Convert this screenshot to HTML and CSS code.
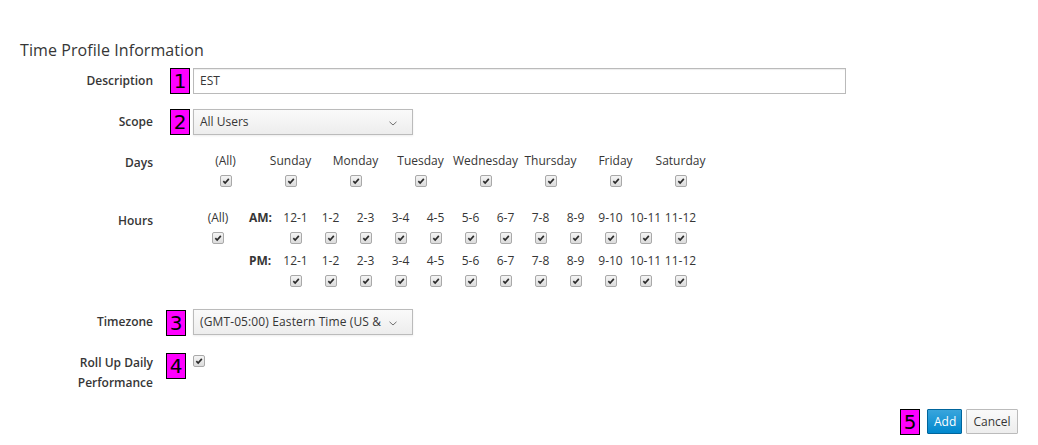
FILE: index.html
```html
<!DOCTYPE html>
<html>
<head>
<meta charset="utf-8">
<link rel="stylesheet" href="styles.css">
</head>
<body>
<div class="page">
  <h3 class="title">Time Profile Information</h3>
  <form class="form">
    <div class="group">
      <div class="label">Description</div>
      <div class="field">
        <span class="badge b-near">1</span>
        <div class="input">EST</div>
      </div>
    </div>
    <div class="group">
      <div class="label">Scope</div>
      <div class="field">
        <span class="badge b-near">2</span>
        <div class="select"><span class="sel-text">All Users</span><svg class="chev" width="8" height="5" viewBox="0 0 8 5"><path d="M0.5 0.8 L4 4 L7.5 0.8" fill="none" stroke="#6f6f6f" stroke-width="1"/></svg></div>
      </div>
    </div>
    <div class="group g-days">
      <div class="label">Days</div>
      <div class="field">
        <div class="days">
          <span class="hd">(All)</span><span class="hd">Sunday</span><span class="hd">Monday</span><span class="hd">Tuesday</span><span class="hd">Wednesday</span><span class="hd">Thursday</span><span class="hd">Friday</span><span class="hd">Saturday</span>
          <span class="cbc"><span class="cb"><svg viewBox="0 0 12 12"><path d="M2.8 6.2 L5 8.4 L9.4 3.4" fill="none" stroke="#2b2b2b" stroke-width="2"/></svg></span></span>
          <span class="cbc"><span class="cb"><svg viewBox="0 0 12 12"><path d="M2.8 6.2 L5 8.4 L9.4 3.4" fill="none" stroke="#2b2b2b" stroke-width="2"/></svg></span></span>
          <span class="cbc"><span class="cb"><svg viewBox="0 0 12 12"><path d="M2.8 6.2 L5 8.4 L9.4 3.4" fill="none" stroke="#2b2b2b" stroke-width="2"/></svg></span></span>
          <span class="cbc"><span class="cb"><svg viewBox="0 0 12 12"><path d="M2.8 6.2 L5 8.4 L9.4 3.4" fill="none" stroke="#2b2b2b" stroke-width="2"/></svg></span></span>
          <span class="cbc"><span class="cb"><svg viewBox="0 0 12 12"><path d="M2.8 6.2 L5 8.4 L9.4 3.4" fill="none" stroke="#2b2b2b" stroke-width="2"/></svg></span></span>
          <span class="cbc"><span class="cb"><svg viewBox="0 0 12 12"><path d="M2.8 6.2 L5 8.4 L9.4 3.4" fill="none" stroke="#2b2b2b" stroke-width="2"/></svg></span></span>
          <span class="cbc"><span class="cb"><svg viewBox="0 0 12 12"><path d="M2.8 6.2 L5 8.4 L9.4 3.4" fill="none" stroke="#2b2b2b" stroke-width="2"/></svg></span></span>
          <span class="cbc"><span class="cb"><svg viewBox="0 0 12 12"><path d="M2.8 6.2 L5 8.4 L9.4 3.4" fill="none" stroke="#2b2b2b" stroke-width="2"/></svg></span></span>
        </div>
      </div>
    </div>
    <div class="group g-hours">
      <div class="label">Hours</div>
      <div class="field">
        <div class="hours" id="hours"></div>
      </div>
    </div>
    <div class="group">
      <div class="label">Timezone</div>
      <div class="field">
        <span class="badge b-far b-tz">3</span>
        <div class="select"><span class="sel-text tz">(GMT-05:00) Eastern Time (US &amp;</span><svg class="chev" width="8" height="5" viewBox="0 0 8 5"><path d="M0.5 0.8 L4 4 L7.5 0.8" fill="none" stroke="#6f6f6f" stroke-width="1"/></svg></div>
      </div>
    </div>
    <div class="group">
      <div class="label">Roll Up Daily<br>Performance</div>
      <div class="field">
        <span class="badge b-far b-roll">4</span>
        <span class="cb cb-roll"><svg viewBox="0 0 12 12"><path d="M2.8 6.2 L5 8.4 L9.4 3.4" fill="none" stroke="#2b2b2b" stroke-width="2"/></svg></span>
      </div>
    </div>
    <div class="actions">
      <span class="badge b-btn">5</span>
      <button type="button" class="btn btn-primary">Add</button>
      <button type="button" class="btn btn-default">Cancel</button>
    </div>
  </form>
</div>
<script src="script.js"></script>
</body>
</html>
```

FILE: script.js
```js
(function () {
  var hours = document.getElementById('hours');
  var labels = ['12-1','1-2','2-3','3-4','4-5','5-6','6-7','7-8','8-9','9-10','10-11','11-12'];
  var check = '<span class="cb"><svg viewBox="0 0 12 12"><path d="M2.8 6.2 L5 8.4 L9.4 3.4" fill="none" stroke="#2b2b2b" stroke-width="2"/></svg></span>';
  var html = '';
  function textRow(first, ampm) {
    html += '<span class="hd">' + first + '</span><span class="ampm">' + ampm + '</span>';
    labels.forEach(function (l) { html += '<span class="hd">' + l + '</span>'; });
  }
  function cbRow(first) {
    html += '<span class="cbc">' + (first ? check : '') + '</span><span class="cbc"></span>';
    labels.forEach(function () { html += '<span class="cbc">' + check + '</span>'; });
  }
  textRow('(All)', 'AM:');
  cbRow(true);
  textRow('', 'PM:');
  cbRow(false);
  hours.innerHTML = html;
})();
```

FILE: styles.css
```css
html, body {
  margin: 0;
  padding: 0;
  background: #fff;
}
body {
  font-family: "Open Sans", "Liberation Sans", sans-serif;
  font-size: 12px;
  color: #363636;
  width: 1038px;
  height: 445px;
  overflow: hidden;
}
.page {
  padding: 40px 20px 0 20px;
}
.title {
  margin: 0;
  font-size: 16px;
  line-height: 20px;
  font-weight: 400;
  color: #363636;
  letter-spacing: 0.08px;
}
.form {
  margin-top: 8px;
  display: flex;
  flex-direction: column;
  gap: 15px;
}
.group {
  display: flex;
  align-items: flex-start;
}
.label {
  width: 133px;
  flex: none;
  text-align: right;
  font-weight: 600;
  line-height: 20px;
  padding-top: 3px;
  margin-right: 40px;
}
.field {
  position: relative;
  flex: none;
}
.badge {
  position: absolute;
  top: 0;
  width: 18px;
  height: 24px;
  background: #ff00ff;
  border: 1px solid #000;
  color: #000;
  font-family: "DejaVu Sans", sans-serif;
  font-size: 20px;
  line-height: 24px;
  text-align: center;
}
.b-near { left: -23px; }
.b-far { left: -27px; }
.b-tz { top: 1px; }
.b-roll { top: 3px; }
.input {
  box-sizing: border-box;
  width: 653px;
  height: 26px;
  border: 1px solid #bababa;
  padding: 0 6px;
  line-height: 24px;
  box-shadow: inset 0 1px 1px rgba(3, 3, 3, 0.075);
  background: #fff;
}
.select {
  box-sizing: border-box;
  width: 220px;
  height: 26px;
  border: 1px solid #bbb;
  background: linear-gradient(#fafafa, #ededed);
  box-shadow: 0 1px 2px rgba(3, 3, 3, 0.08);
  display: flex;
  align-items: center;
  padding-left: 6px;
  position: relative;
}
.sel-text {
  line-height: 24px;
  white-space: nowrap;
}
.tz {
  letter-spacing: 0.12px;
}
.chev {
  position: absolute;
  right: 15px;
  top: 11px;
}
.days {
  display: grid;
  grid-template-columns: repeat(8, 65px);
  grid-template-rows: 20px 23px;
  margin-top: 1px;
  margin-bottom: -1px;
}
.hours {
  display: grid;
  grid-template-columns: 50px 35px repeat(12, 35px);
  grid-template-rows: 20px 23px 20px 23px;
}
.hd {
  text-align: center;
  line-height: 20px;
  white-space: nowrap;
}
.ampm {
  font-weight: 700;
  line-height: 20px;
  padding-left: 6px;
}
.cbc {
  display: flex;
  justify-content: center;
  align-items: flex-start;
  padding-top: 4px;
}
.cb {
  box-sizing: border-box;
  display: block;
  width: 12px;
  height: 12px;
  border: 1px solid #a9a9a9;
  border-radius: 2px;
  background: linear-gradient(#f4f4f4, #dcdcdc);
}
.cb svg {
  display: block;
  width: 10px;
  height: 10px;
}
.cb-roll {
  margin-top: 5px;
}
.actions {
  position: relative;
  display: flex;
  justify-content: flex-end;
  gap: 4px;
  margin-top: 1px;
}
.b-btn {
  left: auto;
  right: 98px;
  top: 0;
}
.btn {
  box-sizing: border-box;
  height: 25px;
  font-family: "Open Sans", "Liberation Sans", sans-serif;
  font-size: 12px;
  padding: 0 6px;
  border-radius: 1px;
  cursor: pointer;
}
.btn-primary {
  width: 35px;
  color: #fff;
  background: linear-gradient(#39a5dc, #0088ce);
  border: 1px solid #00659c;
}
.btn-default {
  width: 52px;
  color: #363636;
  background: linear-gradient(#fafafa, #ededed);
  border: 1px solid #bbb;
}
```
